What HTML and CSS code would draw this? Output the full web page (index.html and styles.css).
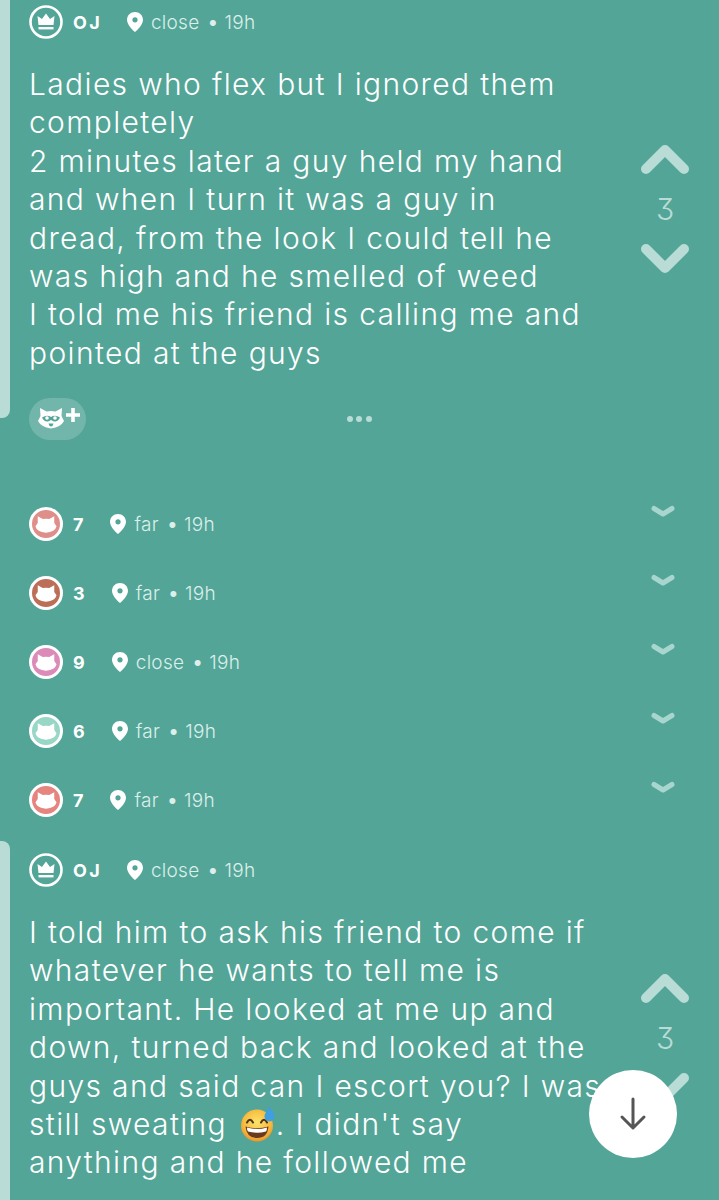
FILE: index.html
```html
<!DOCTYPE html>
<html lang="en">
<head>
  <meta charset="UTF-8">
  <meta name="viewport" content="width=device-width, initial-scale=1.0">
  <title>Thread</title>
  <link rel="stylesheet" href="styles.css">
</head>
<body>
  <svg class="defs" width="0" height="0" aria-hidden="true">
    <symbol id="cat" viewBox="0 0 24 24">
      <path d="M3 3.500 8.500 6.500Q12 5.800 15.500 6.500L21 3.500 21 11 23.500 14.500Q22 21 12 21.500 2 21 .5 14.500L3 11Z"/>
    </symbol>
    <symbol id="crown" viewBox="0 0 34 34">
      <circle cx="17" cy="17" r="15.500" fill="none" stroke="#fff" stroke-width="2.600"/>
      <path d="M8.500 11 13 14 17 8.500 21 14 25.500 11 24.500 20H9.500Z" fill="#fff"/>
      <rect x="9.500" y="22" width="15" height="2.400" fill="#fff"/>
    </symbol>
    <symbol id="pin" viewBox="0 0 16 20">
      <path fill-rule="evenodd" d="M8 0C3.600 0 0 3.400 0 7.700 0 12.500 5 17.500 8 20 11 17.500 16 12.500 16 7.700 16 3.400 12.400 0 8 0ZM8 5.200A2.600 2.600 0 1 1 8 10.400 2.600 2.600 0 0 1 8 5.200Z"/>
    </symbol>
    <symbol id="up" viewBox="0 0 50 33">
      <polyline points="6,27 25,8 44,27" fill="none" stroke-width="10" stroke-linecap="round" stroke-linejoin="round"/>
    </symbol>
    <symbol id="down" viewBox="0 0 50 33">
      <polyline points="6,6 25,25 44,6" fill="none" stroke-width="10" stroke-linecap="round" stroke-linejoin="round"/>
    </symbol>
    <symbol id="small-down" viewBox="0 0 24 13">
      <polyline points="3,3.500 12,9 21,3.500" fill="none" stroke-width="5" stroke-linecap="round" stroke-linejoin="round"/>
    </symbol>
  </svg>

  <div class="post post-first">
    <div class="post-bar"></div>
    <div class="post-main">
      <div class="meta">
        <svg class="avatar-crown"><use href="#crown"/></svg>
        <span class="name">OJ</span>
        <svg class="pin"><use href="#pin"/></svg>
        <span class="where">close</span>
        <span class="dot">•</span>
        <span class="time">19h</span>
      </div>
      <div class="post-body">
        <p class="post-text">Ladies who flex but I ignored them<br>completely<br>2 minutes later a guy held my hand<br>and when I turn it was a guy in<br>dread, from the look I could tell he<br>was high and he smelled of weed<br>I told me his friend is calling me and<br>pointed at the guys</p>
        <div class="votes">
          <svg class="chev"><use href="#up"/></svg>
          <span class="score">3</span>
          <svg class="chev"><use href="#down"/></svg>
        </div>
      </div>
      <div class="actions">
        <button class="react" aria-label="React">
          <svg width="44" height="30" viewBox="0 0 44 30">
            <path fill="#fff" d="M3 4 9.500 7.500Q14 6.500 18.500 7.500L25 4 24.500 12 27 17Q24 23 14 24.500 4 23 1 17L3.500 12Z"/>
            <path fill="#53a597" d="M5 13.500Q10 10.500 14 13 18 10.500 23 13.500 21 18 17 17.500L14 16 11 17.500Q7 18 5 13.500Z"/>
            <circle cx="10" cy="14" r="1.800" fill="#fff"/>
            <circle cx="18" cy="14" r="1.800" fill="#fff"/>
            <path fill="#53a597" d="M11.500 19.500H16.500Q15.800 22.500 14 22.500 12.200 22.500 11.500 19.500Z"/>
            <path stroke="#fff" stroke-width="3.600" d="M36 4V18M29 11H43"/>
          </svg>
        </button>
        <div class="more"><i></i><i></i><i></i></div>
      </div>
    </div>
  </div>

  <div class="replies">
    <div class="reply">
      <div class="meta">
        <span class="avatar salmon"><svg><use href="#cat"/></svg></span>
        <span class="name">7</span>
        <svg class="pin"><use href="#pin"/></svg>
        <span class="where">far</span>
        <span class="dot">•</span>
        <span class="time">19h</span>
      </div>
      <svg class="chev-small"><use href="#small-down"/></svg>
    </div>
    <div class="reply">
      <div class="meta">
        <span class="avatar brown"><svg><use href="#cat"/></svg></span>
        <span class="name">3</span>
        <svg class="pin"><use href="#pin"/></svg>
        <span class="where">far</span>
        <span class="dot">•</span>
        <span class="time">19h</span>
      </div>
      <svg class="chev-small"><use href="#small-down"/></svg>
    </div>
    <div class="reply">
      <div class="meta">
        <span class="avatar pink"><svg><use href="#cat"/></svg></span>
        <span class="name">9</span>
        <svg class="pin"><use href="#pin"/></svg>
        <span class="where">close</span>
        <span class="dot">•</span>
        <span class="time">19h</span>
      </div>
      <svg class="chev-small"><use href="#small-down"/></svg>
    </div>
    <div class="reply">
      <div class="meta">
        <span class="avatar mint"><svg><use href="#cat"/></svg></span>
        <span class="name">6</span>
        <svg class="pin"><use href="#pin"/></svg>
        <span class="where">far</span>
        <span class="dot">•</span>
        <span class="time">19h</span>
      </div>
      <svg class="chev-small"><use href="#small-down"/></svg>
    </div>
    <div class="reply">
      <div class="meta">
        <span class="avatar coral"><svg><use href="#cat"/></svg></span>
        <span class="name">7</span>
        <svg class="pin"><use href="#pin"/></svg>
        <span class="where">far</span>
        <span class="dot">•</span>
        <span class="time">19h</span>
      </div>
      <svg class="chev-small"><use href="#small-down"/></svg>
    </div>
  </div>

  <div class="post post-second">
    <div class="post-bar"></div>
    <div class="post-main">
      <div class="meta">
        <svg class="avatar-crown"><use href="#crown"/></svg>
        <span class="name">OJ</span>
        <svg class="pin"><use href="#pin"/></svg>
        <span class="where">close</span>
        <span class="dot">•</span>
        <span class="time">19h</span>
      </div>
      <div class="post-body">
        <p class="post-text">I told him to ask his friend to come if<br>whatever he wants to tell me is<br>important. He looked at me up and<br>down, turned back and looked at the<br>guys and said can I escort you? I was<br>still sweating <svg class="emoji" viewBox="0 0 36 36" role="img" aria-label="grinning face with sweat">
            <defs><radialGradient id="face" cx="50%" cy="40%" r="62%"><stop offset="0" stop-color="#fde36a"/><stop offset="0.7" stop-color="#f7b93c"/><stop offset="1" stop-color="#e8912a"/></radialGradient></defs>
            <circle cx="17" cy="19.500" r="16" fill="url(#face)"/>
            <path d="M7 16.500Q10 11 13 16.500M21 16.500Q24 11 27 16.500" fill="none" stroke="#4a3520" stroke-width="2" stroke-linecap="round"/>
            <path d="M5.500 20.500Q17 24 28.500 20.500 27.500 32 17 32 6.500 32 5.500 20.500Z" fill="#6b3a1e"/>
            <path d="M7 21.500Q17 24.500 27 21.500 27 25 26 25.500 17 28 8 25.500 7 25 7 21.500Z" fill="#fff"/>
            <path d="M29.500 1Q34.500 7 34.500 10.500A5 5 0 0 1 24.500 10.500Q24.500 7 29.500 1Z" fill="#3f9fe0"/>
          </svg>. I didn't say<br>anything and he followed me</p>
        <div class="votes">
          <svg class="chev"><use href="#up"/></svg>
          <span class="score">3</span>
          <svg class="chev"><use href="#down"/></svg>
        </div>
      </div>
    </div>
  </div>

  <button class="fab" aria-label="Scroll down">
    <svg width="30" height="36" viewBox="0 0 30 36"><path d="M15 3V32M4 21 15 32 26 21" fill="none" stroke="#555" stroke-width="3" stroke-linecap="round" stroke-linejoin="round"/></svg>
  </button>
</body>
</html>
```

FILE: styles.css
```css
html, body {
  height: 1200px;
}
body {
  font-family: Inter, "Liberation Sans", sans-serif;
  font-weight: 300;
  background: #53a597;
  color: #fff;
  margin: 0;
  overflow: hidden;
  position: relative;
}
.defs {
  display: block;
  height: 0;
}

.post {
  display: flex;
}
.post-bar {
  flex: none;
  width: 10px;
  background: #b9dcd6;
}
.post-main {
  flex: 1;
  padding-left: 19px;
  min-width: 0;
}
.post-first {
  height: 418px;
}
.post-first .post-bar {
  border-bottom-right-radius: 8px;
}
.post-first .post-main {
  padding-top: 5px;
}
.post-second {
  height: 359px;
}
.post-second .post-bar {
  border-top-right-radius: 8px;
}
.post-second .post-main {
  padding-top: 12px;
}

.meta {
  display: flex;
  align-items: center;
  height: 34px;
  color: #dcefeb;
  font-size: 19px;
  letter-spacing: 0.3px;
}
.avatar-crown {
  width: 34px;
  height: 34px;
  flex: none;
}
.avatar {
  width: 34px;
  height: 34px;
  flex: none;
  box-sizing: border-box;
  border: 3px solid #fff;
  border-radius: 50%;
  display: flex;
  align-items: center;
  justify-content: center;
}
.avatar svg {
  width: 22px;
  height: 22px;
  fill: #fff;
}
.salmon { background: #e08e8a; }
.brown { background: #bd6e56; }
.pink { background: #dc8ab8; }
.mint { background: #98d6c6; }
.coral { background: #e6847f; }

.name {
  margin-left: 10px;
  margin-top: 1px;
  font-size: 18px;
  font-weight: 700;
  letter-spacing: 2.500px;
  color: #fff;
}
.pin {
  width: 16px;
  height: 20px;
  flex: none;
  margin-left: 24.500px;
  margin-right: 8px;
  fill: #fff;
}
.dot {
  margin-left: 8px;
  margin-right: 6px;
  font-size: 19px;
  font-weight: 400;
}

.post-body {
  display: flex;
  margin-top: 7px;
}
.post-text {
  flex: 1;
  margin: 19px 0 0;
  font-size: 30px;
  letter-spacing: 1.350px;
  line-height: 38.4px;
  white-space: nowrap;
}
.emoji {
  width: 36px;
  height: 36px;
  vertical-align: -7px;
  margin-left: 3px;
}

.votes {
  flex: none;
  width: 50px;
  margin-right: 29px;
  display: flex;
  flex-direction: column;
  align-items: center;
  gap: 17px;
  align-self: flex-start;
}
.post-first .votes {
  margin-top: 96px;
}
.post-second .votes {
  margin-top: 77px;
}
.chev {
  width: 50px;
  height: 33px;
  stroke: #b9dcd6;
}
.score {
  color: #b9dcd6;
  font-size: 30px;
  line-height: 34px;
  font-feature-settings: "cv09";
}

.actions {
  display: grid;
  grid-template-columns: 1fr auto 1fr;
  align-items: center;
  height: 42px;
  margin-top: 26px;
  margin-right: 30px;
}
.react {
  width: 57px;
  height: 42px;
  padding: 6px 0 0 8px;
  border: 0;
  border-radius: 21px;
  background: #72b5aa;
  display: flex;
  align-items: flex-start;
}
.more {
  display: flex;
  gap: 3.500px;
}
.more i {
  width: 6px;
  height: 6px;
  border-radius: 50%;
  background: #b9dcd6;
}

.replies {
  padding: 89px 44px 24px 29px;
  display: flex;
  flex-direction: column;
  gap: 35px;
}
.reply {
  display: flex;
  justify-content: space-between;
  align-items: flex-start;
}
.chev-small {
  width: 24px;
  height: 13px;
  margin-top: -2px;
  stroke: #a8d6cf;
}

.fab {
  position: absolute;
  left: 589px;
  top: 1070px;
  width: 88px;
  height: 88px;
  border: 0;
  border-radius: 50%;
  background: #fff;
  display: flex;
  align-items: center;
  justify-content: center;
  padding: 0;
}
```
